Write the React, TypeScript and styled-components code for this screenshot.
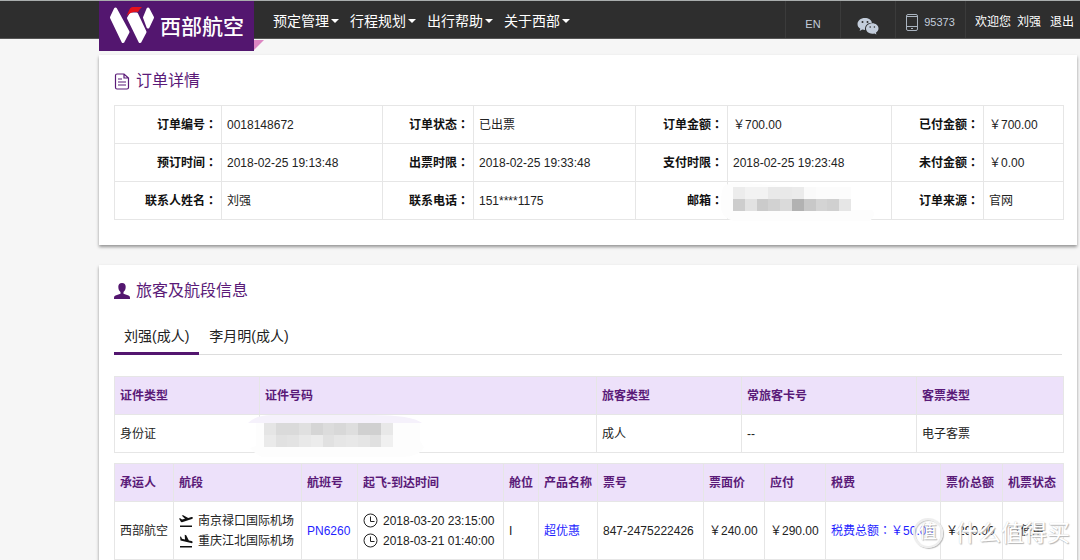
import React from "react";
import styled, { createGlobalStyle } from "styled-components";

const GlobalStyle = createGlobalStyle`
  * { box-sizing: border-box; }
  body {
    margin: 0;
    background: #f6f6f6;
    color: #222;
    font-family: "Liberation Sans", "Noto Sans CJK SC", sans-serif;
    font-size: 12px;
    line-height: 20px;
  }
  a { color: inherit; text-decoration: none; }
  button { font: inherit; color: inherit; background: none; border: 0; padding: 0; }
`;

const Page = styled.div`
  overflow-x: hidden;
`;

const Header = styled.header`
  display: flex;
  height: 39px;
  padding-left: 99px;
  background: #2e2e2e;
  border-top: 1px solid #a9adad;
  border-bottom: 1px solid #555;
`;

const Logo = styled.a`
  position: relative;
  z-index: 2;
  display: flex;
  align-items: center;
  gap: 5px;
  flex: none;
  width: 155px;
  height: 50px;
  padding-left: 10px;
  background: #53166f;
  color: #fff;
  font-size: 21px;
  line-height: 28px;
  font-weight: 500;

  &::after {
    content: "";
    position: absolute;
    left: 100%;
    bottom: 1px;
    border-top: 10px solid #dc86c2;
    border-right: 10px solid transparent;
  }
`;

const LogoText = styled.span`
  padding-top: 2px;
  white-space: nowrap;
`;

const Nav = styled.nav`
  display: flex;
  align-items: center;
  gap: 11px;
  flex: 1;
  padding: 2px 0 0 19px;
`;

const NavButton = styled.button`
  display: flex;
  align-items: center;
  gap: 2px;
  white-space: nowrap;
  color: #fff;
  font-size: 14px;

  &::after {
    content: "";
    border: 4px solid transparent;
    border-top-color: #fff;
    border-bottom: 0;
  }
`;

const Tool = styled.a<{ $width: number; $drop: number }>`
  display: flex;
  align-items: center;
  justify-content: center;
  gap: 6px;
  flex: none;
  width: ${(p) => p.$width}px;
  padding-top: ${(p) => p.$drop}px;
  border-left: 1px solid #3b3b3b;
  color: #c3cddb;
  font-size: 11px;
`;

const Account = styled.div`
  display: flex;
  align-items: center;
  gap: 6px;
  flex: none;
  width: 115px;
  padding: 4px 0 0 9px;
  border-left: 1px solid #3b3b3b;
  color: #fff;
  white-space: nowrap;

  a:last-child { margin-left: 3px; }
`;

const Main = styled.main`
  display: flex;
  flex-direction: column;
  gap: 20px;
  padding: 16px 3px 20px 99px;
`;

const Card = styled.section`
  padding: 16px 15px 25px;
  background: #fff;
  box-shadow: 0 2px 3px rgba(0, 0, 0, 0.4);
`;

const Title = styled.h2`
  display: flex;
  align-items: center;
  gap: 6px;
  margin: 0 0 14px;
  color: #5a1a78;
  font-size: 16px;
  line-height: 20px;
  font-weight: 400;
`;

const DataTable = styled.table`
  width: 100%;
  table-layout: fixed;
  border-collapse: collapse;
  margin-bottom: 10px;

  th, td {
    height: 38px;
    padding: 0 5px;
    border: 1px solid #e6e6e6;
    text-align: left;
    white-space: nowrap;
  }
  thead th {
    background: #ede1fa;
    color: #5a1a78;
  }
  tbody th {
    padding-right: 4px;
    color: #111;
    text-align: right;
  }
`;

const OrderTable = styled(DataTable)`
  margin-bottom: 0;
`;

const FlightTable = styled(DataTable)`
  tbody td { height: 58px; }
`;

/* The TC face centres the full-width colon in its box. */
const Colon = styled.span`
  font-family: "Noto Sans CJK TC", sans-serif;
  line-height: 1;
`;

const TabList = styled.div`
  display: flex;
  margin: 19px 0 21px;
  border-bottom: 1px solid #ddd;
`;

const Tab = styled.button<{ $active?: boolean }>`
  height: 35px;
  margin-bottom: -1px;
  padding: 0 10px;
  border-bottom: 3px solid ${(p) => (p.$active ? "#53166f" : "transparent")};
  font-size: 14px;
`;

const BlueLink = styled.a`
  && { color: #1f1fff; }
`;

const IconLine = styled.div`
  display: flex;
  align-items: center;
  gap: 5px;
`;

const HiddenCell = styled.td`
  position: relative;
`;

const Censor = styled.svg`
  position: absolute;
  z-index: 1;
  left: -12px;
  top: 0;
`;

const MarkedCell = styled.td`
  position: relative;
`;

const Watermark = styled.div`
  position: absolute;
  z-index: 3;
  right: -7px;
  top: 15px;
  display: flex;
  align-items: center;
  gap: 12px;
  color: #fff;
  font-size: 23px;
  line-height: 32px;
  text-shadow: 1px 1px 1px #b4b4b4, 0 0 1px #ccc;
`;

const WatermarkBadge = styled.span`
  width: 30px;
  height: 30px;
  border: 2px solid #eee;
  border-radius: 50%;
  box-shadow: 1px 1px 1px #bbb, inset 1px 1px 1px #ccc;
  font-size: 18px;
  line-height: 25px;
  text-align: center;
`;

const LogoMark = () => (
  <svg width="46" height="38" viewBox="0 0 46 38" aria-hidden="true">
    <g fill="#fff" stroke="#fff" strokeWidth="3" strokeLinejoin="round">
      <path d="M6.500 2 2.500 10.500 14 34.500 19 25z" />
      <path d="M22 7 19.500 11 31 34.500 36 25 27.500 7z" />
      <path d="M39 2 35.500 10.500 39 20 43.500 10.500z" />
    </g>
    <path d="M17.500 9 21 1.500Q22 0 23.500 0H33q-2.500 2-4 5-6-1-11.500 4z" fill="#e5121b" />
  </svg>
);

const WeChatIcon = () => (
  <svg width="22" height="18" viewBox="0 0 22 18" aria-hidden="true">
    <path d="M8 1C3.600 1 .5 3.700.5 7c0 2 1 3.600 2.800 4.700L2.600 14l2.700-1.400c.9.200 1.700.3 2.700.3C7.600 8.500 10.500 5.700 15 5.700 14.400 3 11.500 1 8 1z" fill="#c3cddb" />
    <path d="M21.500 11.500c0-3-2.900-5.200-6.200-5.200S9 8.600 9 11.500s2.800 5.200 6.300 5.200c.7 0 1.400-.1 2.100-.3l2 1.200-.5-1.900c1.600-1.100 2.600-2.600 2.600-4.200z" fill="#c3cddb" />
    <g fill="#2e2e2e"><circle cx="5.500" cy="5" r="1" /><circle cx="10.500" cy="5" r="1" /><circle cx="13.200" cy="10" r=".8" /><circle cx="17.400" cy="10" r=".8" /></g>
  </svg>
);

const PhoneIcon = () => (
  <svg width="12" height="17" viewBox="0 0 12 17" fill="none" stroke="#aab4c0" aria-hidden="true">
    <rect x=".5" y=".5" width="11" height="16" rx="1.500" />
    <path d="M.5 2.500h11M.5 12.500h11M5 14.500h2" />
  </svg>
);

const DocumentIcon = () => (
  <svg width="16" height="17" viewBox="0 0 16 17" fill="none" stroke="#5a1a78" strokeWidth="1.200" aria-hidden="true">
    <path d="M1.500 2.500q0-1.500 1.500-1.500h7l4.500 4v9.500q0 1.500-1.500 1.500H3q-1.500 0-1.500-1.500zM10 1v4h4.500M4 6h4M4 9h8M4 12h8" />
  </svg>
);

const UserIcon = () => (
  <svg width="16" height="16" viewBox="0 0 16 16" fill="#53166f" aria-hidden="true">
    <path d="M8 0C5.500 0 4.300 1.500 4.300 3.700c0 2.300.9 4.300 2.200 5.300v1.800L1.500 12.600Q0 13.200 0 14.700V16h16v-1.300q0-1.500-1.500-2.100L9.500 10.800V9c1.300-1 2.200-3 2.200-5.300C11.700 1.500 10.500 0 8 0z" />
  </svg>
);

const TakeoffIcon = () => (
  <svg width="14" height="14" viewBox="0 0 14 14" fill="#111" aria-hidden="true">
    <path d="M1 11.500h12V13H1zM0 4.500l1.200-.3L3 5.500l3-.8L2.700 1.600l1.500-.4 5 2.700 3.300-.9q1.200-.2 1.400.7t-1 1.300L3 8.300 2 8z" />
  </svg>
);

const LandingIcon = () => (
  <svg width="14" height="14" viewBox="0 0 14 14" fill="#111" aria-hidden="true">
    <path d="M1 12h12v1.500H1zM1 2.500l1.100.3.9 2 3 .8L5.700.8l1.500.4 2.700 5.200 2.700.7q1.200.4 1 1.300t-1.500.7L1.500 6.400z" />
  </svg>
);

const ClockIcon = () => (
  <svg width="15" height="15" viewBox="0 0 15 15" fill="none" stroke="#222" aria-hidden="true">
    <circle cx="7.500" cy="7.500" r="6.500" />
    <path d="M7.500 3.500v5h4" />
  </svg>
);

type MosaicProps = { rows: string[][]; x: number; y: number; width: number };

const Mosaic = ({ rows, x, y, width }: MosaicProps) => (
  <svg x={x} y={y} width={width} height="24" viewBox={`0 0 ${rows[0].length} 2`} preserveAspectRatio="none" shapeRendering="crispEdges">
    {rows.map((row, r) =>
      row.map((fill, c) => <rect key={`${r}-${c}`} x={c} y={r} width="1" height="1" fill={fill} />)
    )}
  </svg>
);

const emailMosaic = [
  ["#ececec", "#f2f2f2", "#f2f2f2", "#e9e9e9", "#e9e9e9", "#ebebeb", "#fafafa", "#fcfcfc", "#fcfcfc", "#fcfcfc"],
  ["#cdcdcd", "#e2e2e2", "#cbcbcb", "#d2d2d2", "#dadada", "#b2b2b2", "#c8c8c8", "#d4d4d4", "#d0d0d0", "#e6e6e6"],
];
const idMosaic = [
  ["#e5e5e5", "#dadada", "#dadada", "#e0e0e0", "#d5d5d5", "#dcdcdc", "#d8d8d8", "#dedede", "#d0d0d0", "#d0d0d0", "#e8e8e8"],
  ["#eaeaea", "#e1e1e1", "#e3e3e3", "#e9e9e9", "#ececec", "#e1e1e1", "#e6e6e6", "#e8e8e8", "#e5e5e5", "#e0e0e0", "#f0f0f0"],
];

const Columns = ({ widths }: { widths: number[] }) => (
  <colgroup>
    {widths.map((w, i) => (
      <col key={i} width={w} />
    ))}
  </colgroup>
);

const Label = ({ children }: { children: React.ReactNode }) => (
  <th scope="row">{children}<Colon>：</Colon></th>
);

const navItems = ["预定管理", "行程规划", "出行帮助", "关于西部"];

const flightHeads = ["承运人", "航段", "航班号", "起飞-到达时间", "舱位", "产品名称", "票号", "票面价", "应付", "税费", "票价总额", "机票状态"];

export default function App() {
  return (
    <Page>
      <GlobalStyle />
      <Header>
        <Logo href="#">
          <LogoMark />
          <LogoText>西部航空</LogoText>
        </Logo>
        <Nav>
          {navItems.map((item) => (
            <NavButton key={item}>{item}</NavButton>
          ))}
        </Nav>
        <Tool href="#" $width={55} $drop={8}>EN</Tool>
        <Tool href="#" $width={55} $drop={12} aria-label="微信"><WeChatIcon /></Tool>
        <Tool href="tel:95373" $width={70} $drop={5}><PhoneIcon />95373</Tool>
        <Account>
          <span>欢迎您</span>
          <a href="#">刘强</a>
          <a href="#">退出</a>
        </Account>
      </Header>
      <Main>
        <Card>
          <Title><DocumentIcon />订单详情</Title>
          <OrderTable>
            <Columns widths={[107, 161, 91, 162, 92, 164, 92, 80]} />
            <tbody>
              <tr>
                <Label>订单编号</Label><td>0018148672</td>
                <Label>订单状态</Label><td>已出票</td>
                <Label>订单金额</Label><td>￥700.00</td>
                <Label>已付金额</Label><td>￥700.00</td>
              </tr>
              <tr>
                <Label>预订时间</Label><td>2018-02-25 19:13:48</td>
                <Label>出票时限</Label><td>2018-02-25 19:33:48</td>
                <Label>支付时限</Label><td>2018-02-25 19:23:48</td>
                <Label>未付金额</Label><td>￥0.00</td>
              </tr>
              <tr>
                <Label>联系人姓名</Label><td>刘强</td>
                <Label>联系电话</Label><td>151****1175</td>
                <Label>邮箱</Label>
                <HiddenCell>
                  <Censor width="162" height="42" viewBox="0 0 162 42" aria-hidden="true">
                    <path d="M8 4q8-5 20-3l66 5v22h62q5 4-2 11H18Q4 36 5 22q0-14 3-18z" fill="#fdfdfd" />
                    <Mosaic rows={emailMosaic} x={17} y={5} width={118} />
                  </Censor>
                </HiddenCell>
                <Label>订单来源</Label><td>官网</td>
              </tr>
            </tbody>
          </OrderTable>
        </Card>
        <Card>
          <Title><UserIcon />旅客及航段信息</Title>
          <TabList role="tablist">
            <Tab role="tab" aria-selected="true" $active>刘强(成人)</Tab>
            <Tab role="tab" aria-selected="false">李月明(成人)</Tab>
          </TabList>
          <DataTable>
            <Columns widths={[145, 337, 145, 175, 147]} />
            <thead>
              <tr>
                {["证件类型", "证件号码", "旅客类型", "常旅客卡号", "客票类型"].map((h) => (
                  <th key={h} scope="col">{h}</th>
                ))}
              </tr>
            </thead>
            <tbody>
              <tr>
                <td>身份证</td>
                <HiddenCell>
                  <Censor width="176" height="46" viewBox="0 0 176 46" aria-hidden="true">
                    <path d="M0 8Q8 0 24 0h100q40 0 50 8z" fill="#f5f1fb" />
                    <path d="M8 8h164v18l4 6q-4 10-24 10H14Q8 40 2 33l6-2z" fill="#fdfdfd" />
                    <Mosaic rows={idMosaic} x={16} y={8} width={129} />
                  </Censor>
                </HiddenCell>
                <td>成人</td>
                <td>--</td>
                <td>电子客票</td>
              </tr>
            </tbody>
          </DataTable>
          <FlightTable>
            <Columns widths={[59, 128, 56, 146, 35, 59, 106, 61, 61, 115, 62, 61]} />
            <thead>
              <tr>
                {flightHeads.map((h) => (
                  <th key={h} scope="col">{h}</th>
                ))}
              </tr>
            </thead>
            <tbody>
              <tr>
                <td>西部航空</td>
                <td>
                  <IconLine><TakeoffIcon />南京禄口国际机场</IconLine>
                  <IconLine><LandingIcon />重庆江北国际机场</IconLine>
                </td>
                <td><BlueLink href="#">PN6260</BlueLink></td>
                <td>
                  <IconLine><ClockIcon />2018-03-20 23:15:00</IconLine>
                  <IconLine><ClockIcon />2018-03-21 01:40:00</IconLine>
                </td>
                <td>I</td>
                <td><BlueLink href="#">超优惠</BlueLink></td>
                <td>847-2475222426</td>
                <td>￥240.00</td>
                <td>￥290.00</td>
                <td><BlueLink href="#">税费总额<Colon>：</Colon>￥50.00</BlueLink></td>
                <td>￥290.00</td>
                <MarkedCell>
                  已使用
                  <Watermark><WatermarkBadge>值</WatermarkBadge>什么值得买</Watermark>
                </MarkedCell>
              </tr>
            </tbody>
          </FlightTable>
        </Card>
      </Main>
    </Page>
  );
}
